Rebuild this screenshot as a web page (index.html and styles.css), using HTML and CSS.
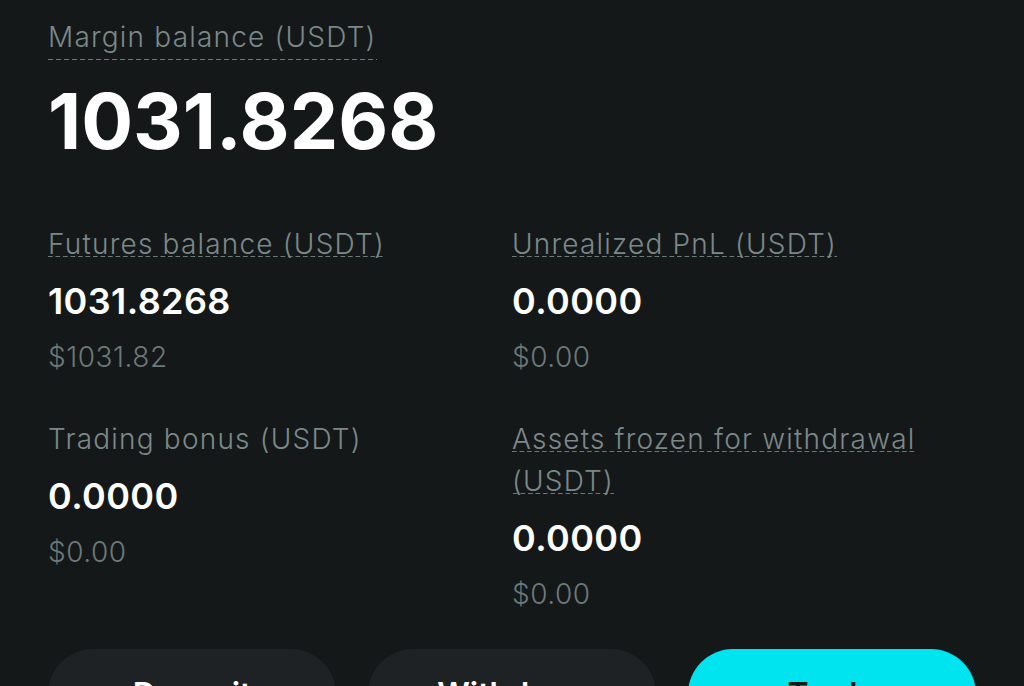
FILE: index.html
```html
<!DOCTYPE html>
<html lang="en">
<head>
    <meta charset="UTF-8">
    <meta name="viewport" content="width=device-width, initial-scale=1.0">
    <title>Futures Account</title>
    <link rel="stylesheet" href="styles.css">
</head>
<body>
    <div class="account">
        <div class="margin">
            <span class="margin-label">Margin balance (USDT)</span>
            <div class="margin-value">1031.8268</div>
        </div>

        <div class="stats">
            <div class="stat">
                <div class="label"><span class="dashed">Futures balance (USDT)</span></div>
                <div class="value">1031.8268</div>
                <div class="sub">$1031.82</div>
            </div>
            <div class="stat">
                <div class="label"><span class="dashed">Unrealized PnL (USDT)</span></div>
                <div class="value">0.0000</div>
                <div class="sub">$0.00</div>
            </div>
            <div class="stat">
                <div class="label">Trading bonus (USDT)</div>
                <div class="value">0.0000</div>
                <div class="sub">$0.00</div>
            </div>
            <div class="stat">
                <div class="label"><span class="dashed">Assets frozen for withdrawal (USDT)</span></div>
                <div class="value">0.0000</div>
                <div class="sub">$0.00</div>
            </div>
        </div>

        <div class="actions">
            <button class="btn">Deposit</button>
            <button class="btn">Withdraw</button>
            <button class="btn primary">Trade</button>
        </div>
    </div>
</body>
</html>
```

FILE: styles.css
```css
body {
    margin: 0;
    background: #151819;
    font-family: Inter, "Noto Sans", sans-serif;
    color: #ffffff;
    overflow: hidden;
}
.account {
    padding: 16px 48px 0;
}
.margin-label {
    display: inline-block;
    font-size: 28px;
    font-weight: 300;
    line-height: 42px;
    letter-spacing: 1.2px;
    color: #7a8988;
    padding-bottom: 2px;
    background-image: linear-gradient(to right, #6a7877 65%, transparent 0);
    background-size: 8px 1px;
    background-repeat: repeat-x;
    background-position: 0 bottom;
}
.margin-value {
    margin-top: 16px;
    font-size: 77px;
    font-weight: 700;
    line-height: 90px;
}
.stats {
    margin-top: 57px;
    display: grid;
    grid-template-columns: 1fr 1fr;
    row-gap: 41px;
}
.stat {
    padding-right: 60px;
}
.label {
    font-size: 28px;
    font-weight: 300;
    line-height: 42px;
    letter-spacing: 1.2px;
    color: #7a8988;
}
.dashed {
    background-image: linear-gradient(to right, #6a7877 65%, transparent 0);
    background-size: 7.5px 1px;
    background-repeat: repeat-x;
    background-position: 0 calc(100% - 4px);
}
.value {
    margin-top: 11px;
    font-size: 36px;
    font-weight: 600;
    line-height: 50px;
    letter-spacing: 0.4px;
}
.sub {
    margin-top: 11px;
    font-size: 28px;
    font-weight: 300;
    line-height: 40px;
    letter-spacing: 0.5px;
    color: #6b7978;
}
.actions {
    margin-top: 35px;
    display: grid;
    grid-template-columns: 1fr 1fr 1fr;
    gap: 32px;
}
.btn {
    height: 90px;
    border: none;
    border-radius: 45px;
    background: #1e2224;
    color: #ffffff;
    font-family: inherit;
    font-size: 32px;
    font-weight: 600;
}
.btn.primary {
    background: #00e4f0;
    color: #151819;
}
```
